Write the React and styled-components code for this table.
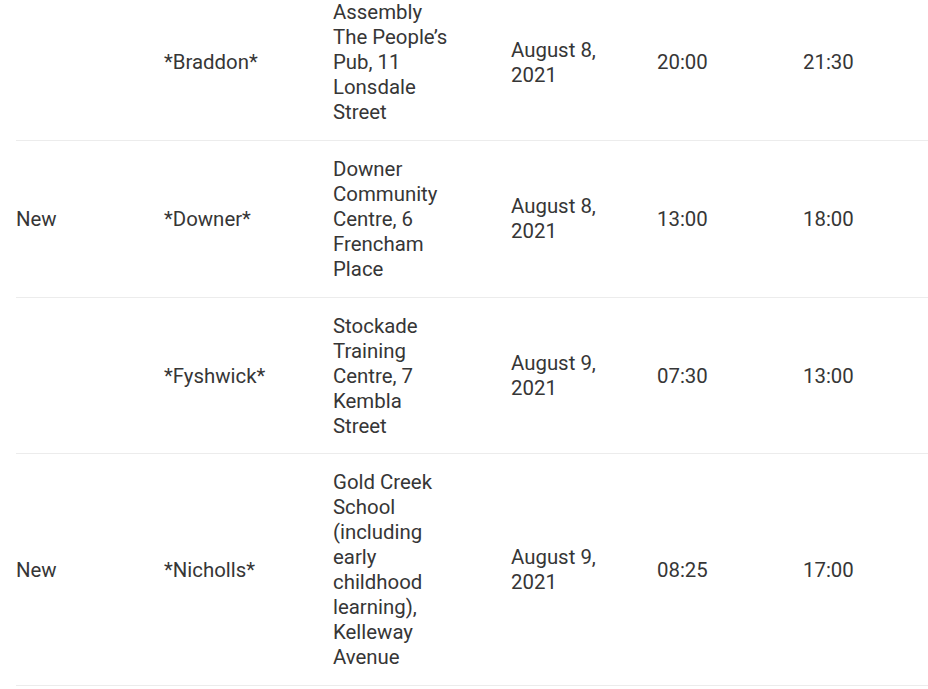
import React from "react";
import styled, { createGlobalStyle } from "styled-components";

const GlobalStyle = createGlobalStyle`
  html, body {
    margin: 0;
    padding: 0;
    background: #fff;
  }
  body {
    font-family: Roboto, "Noto Sans", Arial, sans-serif;
    color: #363636;
    overflow: hidden;
  }
`;

const columns = [
  { key: "status", width: 148, pad: 32 },
  { key: "suburb", width: 169, pad: 32 },
  { key: "place", width: 178, pad: 54 },
  { key: "date", width: 146, pad: 32 },
  { key: "arrival", width: 146, pad: 32 },
  { key: "departure", width: 141, pad: 32 },
];

const sites = [
  {
    status: "",
    suburb: "*Braddon*",
    place: "Assembly The People’s Pub, 11 Lonsdale Street",
    date: "August 8, 2021",
    arrival: "20:00",
    departure: "21:30",
  },
  {
    status: "New",
    suburb: "*Downer*",
    place: "Downer Community Centre, 6 Frencham Place",
    date: "August 8, 2021",
    arrival: "13:00",
    departure: "18:00",
  },
  {
    status: "",
    suburb: "*Fyshwick*",
    place: "Stockade Training Centre, 7 Kembla Street",
    date: "August 9, 2021",
    arrival: "07:30",
    departure: "13:00",
  },
  {
    status: "New",
    suburb: "*Nicholls*",
    place:
      "Gold Creek School (including early childhood learning), Kelleway Avenue",
    date: "August 9, 2021",
    arrival: "08:25",
    departure: "17:00",
  },
];

const App = () => {
  return (
    <>
      <GlobalStyle />
      <Wrapper>
        <Table>
          <colgroup>
            {columns.map((col) => (
              <col key={col.key} style={{ width: `${col.width}px` }} />
            ))}
          </colgroup>
          <tbody>
            {sites.map((site, index) => (
              <Row key={index}>
                {columns.map((col) => (
                  <Cell key={col.key} $pad={col.pad}>
                    {site[col.key]}
                  </Cell>
                ))}
              </Row>
            ))}
          </tbody>
        </Table>
      </Wrapper>
    </>
  );
};

const Wrapper = styled.main`
  padding-left: 16px;
  margin-top: -16px;
`;

const Table = styled.table`
  width: 928px;
  border-collapse: collapse;
  table-layout: fixed;
  font-size: 20.4px;
  font-weight: 400;
  line-height: 25px;
`;

const Row = styled.tr`
  border-bottom: 1px solid #ececec;
`;

const Cell = styled.td`
  padding: 16px ${(p) => p.$pad}px 14.8px 0;
  vertical-align: middle;
  text-align: left;
`;

export default App;
